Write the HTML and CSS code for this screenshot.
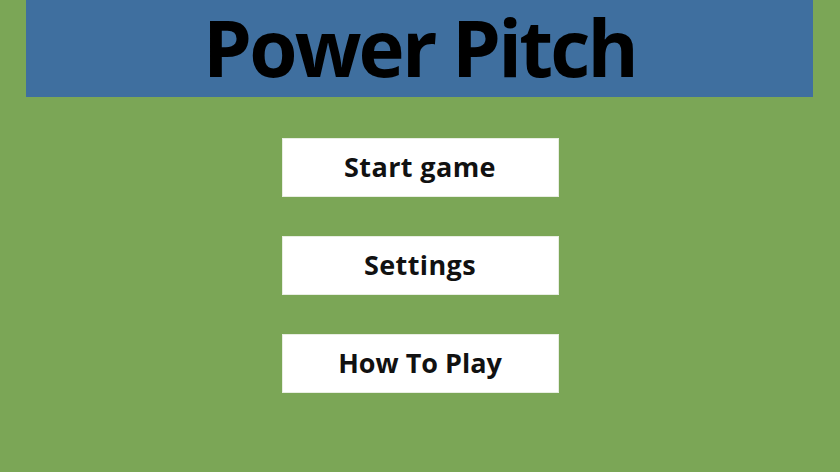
FILE: index.html
```html
<!DOCTYPE html>
<html>
<head>
<meta charset="utf-8">
<link rel="stylesheet" href="styles.css">
</head>
<body>
<div class="screen">
  <header class="banner"><h1 class="title">Power Pitch</h1></header>
  <nav class="menu">
    <div class="btn">Start game</div>
    <div class="btn">Settings</div>
    <div class="btn btn-tight">How To Play</div>
  </nav>
</div>
</body>
</html>
```
FILE: styles.css
```css
html, body { margin: 0; padding: 0; }
body { background: #7ba656; font-family: "Open Sans", "DejaVu Sans", sans-serif; }
.screen { width: 840px; height: 472px; display: flex; flex-direction: column; align-items: center; }
.banner { width: 787px; height: 97px; margin-left: -1px; background: #3f6f9f; display: flex; align-items: center; justify-content: center; }
.title { margin: 0 0 4px; padding: 0 6px; font-size: 78px; font-weight: 700; color: #000; letter-spacing: -2.8px; line-height: 90px; white-space: nowrap; }
.menu { margin-top: 41px; display: flex; flex-direction: column; gap: 39px; }
.btn { width: 277px; height: 59px; background: #fff; box-sizing: border-box; border: 1px solid #e8eee2; display: flex; align-items: center; justify-content: center; font-size: 27px; font-weight: 700; color: #111; letter-spacing: 0.4px; padding-bottom: 2px; }
.btn-tight { letter-spacing: 0; }
```
